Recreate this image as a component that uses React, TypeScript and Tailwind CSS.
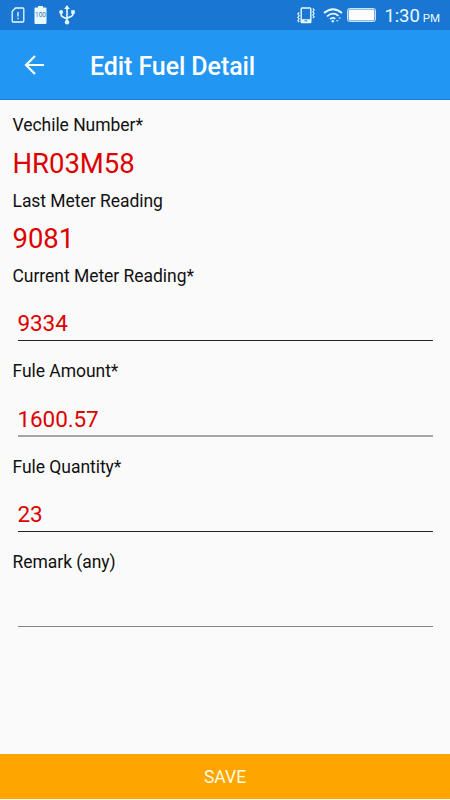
const readings = [
  { label: "Vechile Number*", value: "HR03M58" },
  { label: "Last Meter Reading", value: "9081" },
];

const fields = [
  {
    name: "currentReading",
    label: "Current Meter Reading*",
    value: "9334",
    line: "h-[35px] border-b border-[#222222]",
  },
  {
    name: "amount",
    label: "Fule Amount*",
    value: "1600.57",
    line: "h-[36px] border-b-2 border-[#a6a6a6] pt-px",
  },
  {
    name: "quantity",
    label: "Fule Quantity*",
    value: "23",
    line: "h-[35px] border-b border-[#222222]",
  },
  {
    name: "remark",
    label: "Remark (any)",
    value: "",
    line: "h-[35px] border-b border-[#858585]",
  },
];

function StatusBar() {
  return (
    <div className="flex h-[30px] shrink-0 items-center justify-between bg-[#1976d2] pr-[10px] pl-[11px] text-[#e8fbff]">
      <div className="flex items-center">
        {/* SIM alert */}
        <svg width="14" height="16" viewBox="0 0 14 16" fill="none" stroke="currentColor">
          <path d="M4.5 1H11.8Q12.8 1 12.8 2V14Q12.8 15 11.8 15H2.2Q1.2 15 1.2 14V4.3Z" strokeWidth="1.3" />
          <path d="M7 5V9.5M7 10.8V12.2" strokeWidth="1.3" />
        </svg>

        {/* Battery percentage */}
        <svg className="ml-[9px]" width="13" height="18" viewBox="0 0 13 18">
          <path d="M4 0H9V1.5H11.5Q12.5 1.5 12.5 2.5V17Q12.5 18 11.5 18H1.5Q0.5 18 0.5 17V2.5Q0.5 1.5 1.5 1.5H4Z" fill="currentColor" />
          <text x="6.5" y="11.4" fontSize="6.5" textAnchor="middle" fill="#2f74ad" fontFamily="Roboto, sans-serif">
            100
          </text>
        </svg>

        {/* USB */}
        <svg className="ml-[12px]" width="16" height="20" viewBox="0 0 16 20" fill="none" stroke="currentColor" strokeWidth="1.6">
          <path d="M8 3V17M2.1 7V9.5Q2.1 11 3.5 11.7L8 14M14 6.5V9Q14 10.5 12.5 11.2L8 13.2" />
          <path d="M8 0L10.8 4H5.2Z" fill="currentColor" stroke="none" />
          <circle cx="2.1" cy="7" r="2" fill="currentColor" stroke="none" />
          <path d="M12.2 5.2H15.8V8.8H12.2Z" fill="currentColor" stroke="none" />
          <circle cx="8" cy="17.2" r="2.2" fill="currentColor" stroke="none" />
        </svg>
      </div>

      <div className="flex items-center">
        {/* Vibrate */}
        <svg width="18" height="17" viewBox="0 0 18 17" fill="none" stroke="currentColor">
          <rect x="4.2" y="1" width="9.6" height="14.5" rx="0.8" strokeWidth="1.4" />
          <path d="M4.2 13.7H13.8" strokeWidth="3" />
          <path d="M7.5 13.8H10.5" stroke="#1976d2" strokeWidth="1" />
          <path d="M2.2 5.5L0.8 7L2.2 8.7L0.8 10.4L2.2 12L0.8 13.6L2.2 15M15.8 1.5L17.2 3L15.8 4.7L17.2 6.4L15.8 8L17.2 9.6L15.8 11" strokeWidth="1.1" />
        </svg>

        {/* Wifi */}
        <svg className="ml-[8px]" width="20" height="15" viewBox="0 0 20 15" fill="none" stroke="currentColor">
          <path d="M1 5Q10 -2.5 19 5" strokeWidth="1.7" />
          <path d="M4 8.3Q10 3.3 15.5 7.8" strokeWidth="1.7" />
          <path d="M7 11.2Q9.7 8.8 12.3 10.8" strokeWidth="1.7" />
          <circle cx="9.8" cy="13.2" r="1.2" fill="currentColor" stroke="none" />
          <path d="M12.7 12H15.7L14.2 14ZM15.2 10.8H18.2L16.7 8.8Z" fill="currentColor" stroke="none" opacity="0.7" />
        </svg>

        {/* Battery */}
        <svg className="ml-[4px]" width="29" height="14" viewBox="0 0 29 14">
          <rect x="0.5" y="0.5" width="28" height="13" rx="2" fill="none" stroke="currentColor" strokeWidth="1" opacity="0.85" />
          <rect x="1.6" y="1.6" width="25.8" height="10.8" rx="0.8" fill="#ffffff" />
        </svg>

        <div className="ml-[8px] flex translate-y-px items-baseline">
          <span className="text-[18.5px] leading-[30px] tracking-[-0.1px]">1:30</span>
          <span className="ml-[3px] text-[11.5px]">PM</span>
        </div>
      </div>
    </div>
  );
}

export default function App() {
  return (
    <div className="flex h-[800px] w-[450px] flex-col overflow-hidden bg-[#fafafa] font-[Roboto,sans-serif]">
      <StatusBar />

      <header className="flex h-[70px] shrink-0 items-center border-b border-[#1b80d6] bg-[#2196f3] pt-[3px] pl-[24px] text-white">
        <button type="button" aria-label="Back" className="mt-[-2px]">
          <svg width="20" height="20" viewBox="0 0 20 20" fill="none" stroke="currentColor" strokeWidth="2.2">
            <path d="M20 10H2M11 1L2 10L11 19" />
          </svg>
        </button>
        <h1 className="ml-[46px] text-[25px] leading-[37px] font-medium tracking-[-0.09px]">
          Edit Fuel Detail
        </h1>
      </header>

      <form className="flex flex-1 flex-col">
        <main className="flex-1 px-[12.5px] pt-[13px] text-[17.5px] tracking-[-0.04px] text-[#111111]">
          {readings.map((item) => (
            <div key={item.label} className="h-[75.5px]">
              <p className="leading-[24px]">{item.label}</p>
              <p className="mt-[7.6px] text-[27.5px] leading-[38px] text-[#dd0000]">
                {item.value}
              </p>
            </div>
          ))}

          {fields.map((field) => (
            <div key={field.name} className="h-[95.4px]">
              <label htmlFor={field.name} className="block leading-[24px]">
                {field.label}
              </label>
              <div className="pt-[18px] pr-[5px] pl-[5px]">
                <input
                  id={field.name}
                  name={field.name}
                  defaultValue={field.value}
                  className={`block w-full text-[22.5px] tracking-[-0.1px] text-[#dd0000] outline-none ${field.line}`}
                />
              </div>
            </div>
          ))}
        </main>

        <button
          type="submit"
          className="mb-px h-[45px] shrink-0 bg-[#ffa500] pt-[2px] text-[17.5px] text-[#fffbe0]"
        >
          SAVE
        </button>
      </form>
    </div>
  );
}
